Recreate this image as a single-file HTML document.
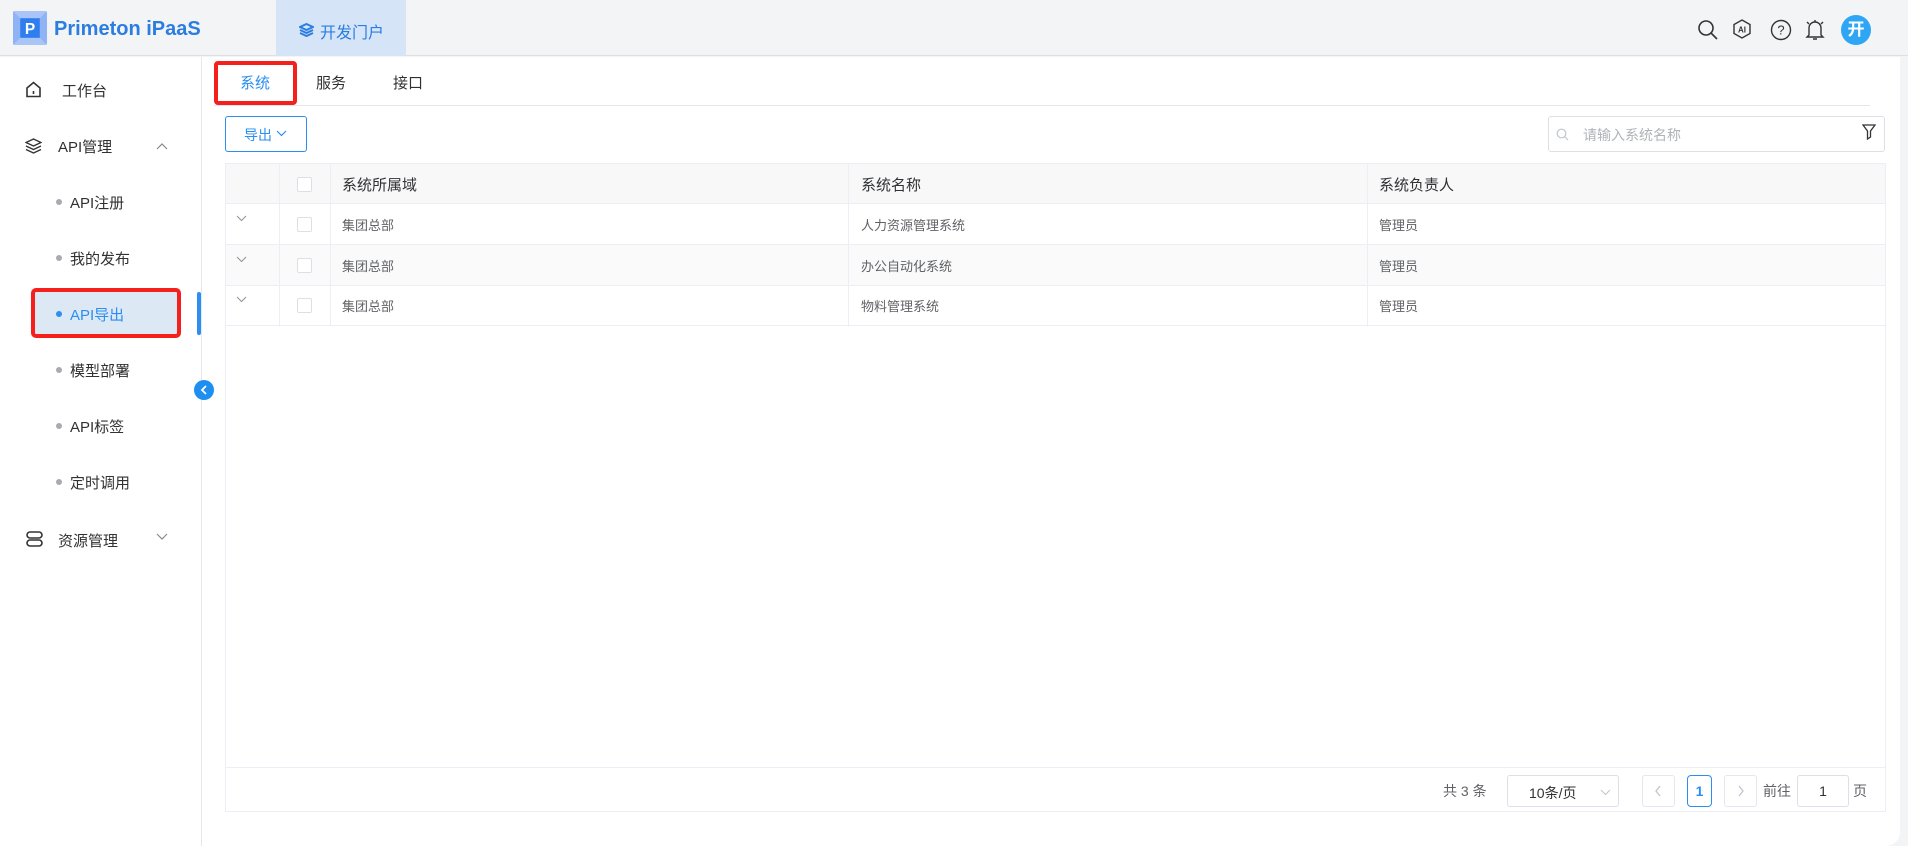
<!DOCTYPE html>
<html><head><meta charset="utf-8"><style>
*{box-sizing:border-box;margin:0;padding:0}
body{width:1908px;height:846px;overflow:hidden;background:#f3f4f6;font-family:"Liberation Sans","Noto Sans CJK SC",sans-serif;position:relative;color:#303133}
.abs{position:absolute}
.hdr{left:0;top:0;width:1908px;height:56px;background:#f3f4f6;border-bottom:1px solid #dcdfe6}
.main{left:0;top:57px;width:1900px;height:789px;background:#fff;border-bottom-right-radius:14px}
.side{left:0;top:57px;width:202px;height:789px;border-right:1px solid #e4e7ed;background:#fff}
.mi{position:absolute;font-size:15px;color:#303133}
.dot{position:absolute;width:6px;height:6px;border-radius:50%;background:#a8abb2}
.cell{position:absolute;font-size:13px;color:#606266}
.cb{position:absolute;width:15px;height:15px;border:1px solid #dcdfe6;border-radius:2px;background:#fff}
.vl{position:absolute;width:1px;background:#ebeef5}
</style></head><body>
<div class="abs hdr"></div>
<svg class="abs" style="left:13px;top:11px" width="34" height="34" viewBox="0 0 33 33">
<rect width="33" height="33" rx="2" fill="#8fb3f5"/>
<polygon points="0,0 33,0 26,7 7,7" fill="#a9c4f7"/><polygon points="0,33 33,33 26,26 7,26" fill="#a9c4f7"/>
<rect x="7" y="7" width="19" height="19" fill="#2f7ef0"/>
<text x="16.5" y="22.5" text-anchor="middle" font-size="15" font-weight="bold" fill="#fff" font-family="Liberation Sans">P</text></svg>
<div class="abs" style="left:54px;top:18px;font-size:20px;font-weight:bold;color:#2b7de0">Primeton iPaaS</div>
<div class="abs" style="left:276px;top:0;width:130px;height:56px;background:#d5e5f7"></div>
<svg class="abs" style="left:299px;top:23px" width="15" height="14" viewBox="0 0 15 14"><path d="M7.5 1L14 4 7.5 7 1 4z M1 7l6.5 3 6.5-3 M1 10l6.5 3 6.5-3" fill="none" stroke="#2b7de0" stroke-width="2"/></svg>
<div class="abs" style="left:320px;top:19px;font-size:16px;color:#2b7de0">开发门户</div>
<svg class="abs" style="left:1697px;top:19px" width="22" height="22" viewBox="0 0 22 22"><circle cx="9" cy="9" r="7" fill="none" stroke="#333" stroke-width="1.6"/><path d="M14 14l6 6" stroke="#333" stroke-width="1.6"/></svg>
<svg class="abs" style="left:1731px;top:18px" width="22" height="22" viewBox="0 0 22 22"><path d="M11 2l8 4.5v9L11 20l-8-4.5v-9z" fill="none" stroke="#333" stroke-width="1.4"/><text x="11" y="14.5" text-anchor="middle" font-size="8" font-weight="bold" fill="#333" font-family="Liberation Sans">AI</text></svg>
<svg class="abs" style="left:1770px;top:19px" width="22" height="22" viewBox="0 0 22 22"><circle cx="11" cy="11" r="9.5" fill="none" stroke="#333" stroke-width="1.4"/><text x="11" y="15.5" text-anchor="middle" font-size="13" fill="#333" font-family="Liberation Sans">?</text></svg>
<svg class="abs" style="left:1804px;top:17px" width="22" height="25" viewBox="0 0 22 25"><path d="M5 18V11a6 6 0 0 1 12 0v7l2 2H3z M9 22h4 M11 3v2 M3 5l2 2 M19 5l-2 2" fill="none" stroke="#333" stroke-width="1.4"/></svg>
<div class="abs" style="left:1841px;top:15px;width:30px;height:30px;border-radius:50%;background:#2ea6f4;color:#fff;font-size:17px;font-weight:bold;text-align:center;line-height:30px">开</div>
<div class="abs main"></div>
<div class="abs side"></div>
<svg class="abs" style="left:25px;top:81px" width="17" height="17" viewBox="0 0 17 17"><path d="M2 7l6.5-5.5L15 7v8.5H2z M8.5 10v3" fill="none" stroke="#333" stroke-width="1.6"/></svg>
<div class="mi" style="left:62px;top:80px">工作台</div>
<svg class="abs" style="left:25px;top:138px" width="17" height="16" viewBox="0 0 17 16"><path d="M8.5 1L16 4.5 8.5 8 1 4.5z M1 8l7.5 3.5L16 8 M1 11.5L8.5 15 16 11.5" fill="none" stroke="#333" stroke-width="1.4"/></svg>
<div class="mi" style="left:58px;top:136px">API管理</div>
<svg class="abs" style="left:156px;top:142px" width="12" height="8"><path d="M1 7l5-5 5 5" fill="none" stroke="#888" stroke-width="1.2"/></svg>
<div class="dot" style="left:56px;top:199px"></div><div class="mi" style="left:70px;top:192px">API注册</div>
<div class="dot" style="left:56px;top:255px"></div><div class="mi" style="left:70px;top:248px">我的发布</div>
<div class="abs" style="left:31px;top:288px;width:150px;height:50px;border:4px solid #f5201c;border-radius:5px;background:#dde8f5"></div>
<div class="dot" style="left:56px;top:311px;background:#2b8ef0"></div><div class="mi" style="left:70px;top:304px;color:#2b8ef0">API导出</div>
<div class="abs" style="left:197px;top:292px;width:4px;height:43px;border-radius:2px;background:#2b8ef0"></div>
<div class="dot" style="left:56px;top:367px"></div><div class="mi" style="left:70px;top:360px">模型部署</div>
<div class="dot" style="left:56px;top:423px"></div><div class="mi" style="left:70px;top:416px">API标签</div>
<div class="dot" style="left:56px;top:479px"></div><div class="mi" style="left:70px;top:472px">定时调用</div>
<svg class="abs" style="left:26px;top:531px" width="17" height="16" viewBox="0 0 17 16"><rect x="1" y="1" width="15" height="6" rx="3" fill="none" stroke="#333" stroke-width="1.6"/><rect x="1" y="9" width="15" height="6" rx="3" fill="none" stroke="#333" stroke-width="1.6"/></svg>
<div class="mi" style="left:58px;top:530px">资源管理</div>
<svg class="abs" style="left:156px;top:533px" width="12" height="8"><path d="M1 1l5 5 5-5" fill="none" stroke="#888" stroke-width="1.2"/></svg>
<div class="abs" style="left:194px;top:380px;width:20px;height:20px;border-radius:50%;background:#1f8ef1"></div>
<svg class="abs" style="left:199px;top:384px" width="10" height="12"><path d="M7 2L3 6l4 4" fill="none" stroke="#fff" stroke-width="1.8"/></svg>
<div class="abs" style="left:214px;top:61px;width:83px;height:44px;border:4px solid #f5201c;border-radius:4px"></div>
<div class="abs" style="left:240px;top:72px;font-size:15px;color:#2b8ef0">系统</div>
<div class="abs" style="left:316px;top:72px;font-size:15px">服务</div>
<div class="abs" style="left:393px;top:72px;font-size:15px">接口</div>
<div class="abs" style="left:214px;top:105px;width:1656px;height:1px;background:#e4e7ed"></div>
<div class="abs" style="left:225px;top:116px;width:82px;height:36px;border:1px solid #2b8ef0;border-radius:3px;color:#2b8ef0;font-size:14px;padding:8px 0 0 18px">导出</div>
<svg class="abs" style="left:276px;top:130px" width="11" height="7"><path d="M1 1l4.5 4.5L10 1" fill="none" stroke="#2b8ef0" stroke-width="1.2"/></svg>
<div class="abs" style="left:1548px;top:116px;width:337px;height:36px;border:1px solid #dcdfe6;border-radius:3px"></div>
<svg class="abs" style="left:1556px;top:128px" width="13" height="13"><circle cx="5.5" cy="5.5" r="4.3" fill="none" stroke="#c0c4cc" stroke-width="1.2"/><path d="M9 9l3 3" stroke="#c0c4cc" stroke-width="1.2"/></svg>
<div class="abs" style="left:1583px;top:125px;font-size:14px;color:#b0b3b9">请输入系统名称</div>
<svg class="abs" style="left:1862px;top:124px" width="14" height="16"><path d="M1 1h12L8.5 7v6l-3 2V7z" fill="none" stroke="#333" stroke-width="1.3"/></svg>
<div class="abs" style="left:225px;top:163px;width:1661px;height:649px;border:1px solid #ebeef5"></div>
<div class="abs" style="left:226px;top:164px;width:1659px;height:40px;background:#f8f8f9;border-bottom:1px solid #ebeef5"></div>
<div class="abs" style="left:226px;top:245px;width:1659px;height:40px;background:#fafafa"></div>
<div class="abs" style="left:226px;top:244px;width:1659px;height:1px;background:#ebeef5"></div>
<div class="abs" style="left:226px;top:285px;width:1659px;height:1px;background:#ebeef5"></div>
<div class="abs" style="left:226px;top:325px;width:1659px;height:1px;background:#ebeef5"></div>
<div class="vl" style="left:279px;top:164px;height:161px"></div>
<div class="vl" style="left:330px;top:164px;height:161px"></div>
<div class="vl" style="left:848px;top:164px;height:161px"></div>
<div class="vl" style="left:1367px;top:164px;height:161px"></div>
<div class="cb" style="left:297px;top:177px"></div>
<div class="abs" style="left:342px;top:174px;font-size:15px">系统所属域</div>
<div class="abs" style="left:861px;top:174px;font-size:15px">系统名称</div>
<div class="abs" style="left:1379px;top:174px;font-size:15px">系统负责人</div>
<svg class="abs" style="left:236px;top:215px" width="11" height="7"><path d="M1 1l4.5 4.5L10 1" fill="none" stroke="#909399"/></svg>
<div class="cb" style="left:297px;top:217px"></div>
<div class="cell" style="left:342px;top:215px">集团总部</div><div class="cell" style="left:861px;top:215px">人力资源管理系统</div><div class="cell" style="left:1379px;top:215px">管理员</div>
<svg class="abs" style="left:236px;top:256px" width="11" height="7"><path d="M1 1l4.5 4.5L10 1" fill="none" stroke="#909399"/></svg>
<div class="cb" style="left:297px;top:258px"></div>
<div class="cell" style="left:342px;top:256px">集团总部</div><div class="cell" style="left:861px;top:256px">办公自动化系统</div><div class="cell" style="left:1379px;top:256px">管理员</div>
<svg class="abs" style="left:236px;top:296px" width="11" height="7"><path d="M1 1l4.5 4.5L10 1" fill="none" stroke="#909399"/></svg>
<div class="cb" style="left:297px;top:298px"></div>
<div class="cell" style="left:342px;top:296px">集团总部</div><div class="cell" style="left:861px;top:296px">物料管理系统</div><div class="cell" style="left:1379px;top:296px">管理员</div>
<div class="abs" style="left:226px;top:767px;width:1659px;height:1px;background:#ebeef5"></div>
<div class="abs" style="left:1443px;top:781px;font-size:14px;color:#606266">共 3 条</div>
<div class="abs" style="left:1507px;top:775px;width:112px;height:32px;border:1px solid #dcdfe6;border-radius:3px;font-size:14px;padding:7px 0 0 21px">10条/页</div>
<svg class="abs" style="left:1600px;top:789px" width="11" height="7"><path d="M1 1l4.5 4.5L10 1" fill="none" stroke="#c0c4cc"/></svg>
<div class="abs" style="left:1642px;top:775px;width:33px;height:32px;border:1px solid #e4e7ed;border-radius:3px"></div>
<svg class="abs" style="left:1654px;top:785px" width="8" height="12"><path d="M6 1L2 6l4 5" fill="none" stroke="#c0c4cc" stroke-width="1.3"/></svg>
<div class="abs" style="left:1687px;top:775px;width:25px;height:32px;border:1px solid #2b8ef0;border-radius:4px;color:#2b8ef0;font-size:14px;font-weight:bold;text-align:center;line-height:30px">1</div>
<div class="abs" style="left:1724px;top:775px;width:33px;height:32px;border:1px solid #e4e7ed;border-radius:3px"></div>
<svg class="abs" style="left:1737px;top:785px" width="8" height="12"><path d="M2 1l4 5-4 5" fill="none" stroke="#c0c4cc" stroke-width="1.3"/></svg>
<div class="abs" style="left:1763px;top:781px;font-size:14px;color:#606266">前往</div>
<div class="abs" style="left:1797px;top:775px;width:52px;height:32px;border:1px solid #dcdfe6;border-radius:3px;text-align:center;line-height:30px;font-size:14px">1</div>
<div class="abs" style="left:1853px;top:781px;font-size:14px;color:#606266">页</div>
</body></html>
